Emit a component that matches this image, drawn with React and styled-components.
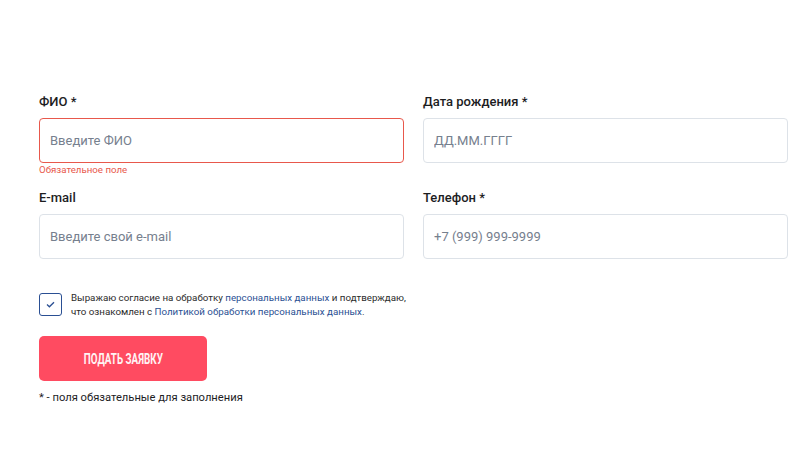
import React from "react";
import styled, { createGlobalStyle } from "styled-components";

const theme = {
  color: {
    text: "#1d1d1f",
    placeholder: "#76808e",
    border: "#dde2e8",
    error: "#e8584c",
    link: "#2a4f93",
    accent: "#ff4b61",
  },
};

const GlobalStyle = createGlobalStyle`
  body {
    margin: 0;
    background: #fff;
    font-family: Roboto, "Noto Sans", Arial, sans-serif;
    color: ${theme.color.text};
  }
`;

const Page = styled.div`
  width: 800px;
  height: 458px;
  box-sizing: border-box;
  padding: 93px 12px 0 39px;
`;

const Grid = styled.div`
  display: grid;
  grid-template-columns: 1fr 1fr;
  column-gap: 19px;
`;

const Field = styled.div`
  display: flex;
  flex-direction: column;
  min-height: 96px;
`;

const Label = styled.label`
  font-size: 13px;
  line-height: 17px;
  font-weight: 500;
  margin-bottom: 8px;
`;

const Input = styled.input`
  box-sizing: border-box;
  height: 45px;
  width: 100%;
  padding: 0 10px;
  border: 1px solid ${(p) => (p.$error ? theme.color.error : theme.color.border)};
  border-radius: 4px;
  font-family: Roboto, sans-serif;
  font-size: 13px;
  color: ${theme.color.text};
  outline: none;
  &::placeholder {
    color: ${theme.color.placeholder};
  }
`;

const Hint = styled.div`
  margin-top: 1px;
  font-size: 9.7px;
  line-height: 12px;
  color: ${theme.color.error};
`;

const Consent = styled.div`
  display: flex;
  align-items: flex-start;
  gap: 9px;
  margin-top: 6px;
`;

const Check = styled.span`
  flex: none;
  box-sizing: border-box;
  width: 23px;
  height: 23px;
  margin-top: 2px;
  border: 1px solid ${theme.color.link};
  border-radius: 3px;
  display: flex;
  align-items: center;
  justify-content: center;
`;

const ConsentText = styled.p`
  margin: 0;
  font-size: 9.75px;
  line-height: 14px;
  color: #2b2b2b;
`;

const Link = styled.a`
  color: ${theme.color.link};
  text-decoration: none;
`;

const Button = styled.button`
  display: flex;
  align-items: center;
  justify-content: center;
  width: 168px;
  height: 45px;
  margin-top: 17px;
  border: none;
  border-radius: 5px;
  background: ${theme.color.accent};
  cursor: pointer;
`;

const ButtonText = styled.span`
  display: inline-block;
  font-family: Roboto, sans-serif;
  font-weight: 700;
  font-size: 15px;
  color: #fff3f4;
  transform: scaleX(0.655);
  white-space: nowrap;
`;

const Note = styled.div`
  margin-top: 9px;
  font-size: 11.2px;
  line-height: 16px;
`;

const fields = [
  { label: "ФИО *", placeholder: "Введите ФИО", error: "Обязательное поле" },
  { label: "Дата рождения *", placeholder: "ДД.ММ.ГГГГ" },
  { label: "E-mail", placeholder: "Введите свой e-mail" },
  { label: "Телефон *", placeholder: "+7 (999) 999-9999" },
];

export default function App() {
  return (
    <>
      <GlobalStyle />
      <Page>
        <Grid>
          {fields.map((f) => (
            <Field key={f.label}>
              <Label>{f.label}</Label>
              <Input placeholder={f.placeholder} $error={!!f.error} />
              {f.error && <Hint>{f.error}</Hint>}
            </Field>
          ))}
        </Grid>
        <Consent>
          <Check>
            <svg width="9" height="7" viewBox="0 0 9 7" fill="none">
              <path d="M1 3.6 L3.4 5.8 L8 1.2" stroke={theme.color.link} strokeWidth="1.3" />
            </svg>
          </Check>
          <ConsentText>
            Выражаю согласие на обработку <Link href="#">персональных данных</Link> и подтверждаю,
            <br />
            что ознакомлен с <Link href="#">Политикой обработки персональных данных</Link>.
          </ConsentText>
        </Consent>
        <Button>
          <ButtonText>ПОДАТЬ ЗАЯВКУ</ButtonText>
        </Button>
        <Note>* - поля обязательные для заполнения</Note>
      </Page>
    </>
  );
}
